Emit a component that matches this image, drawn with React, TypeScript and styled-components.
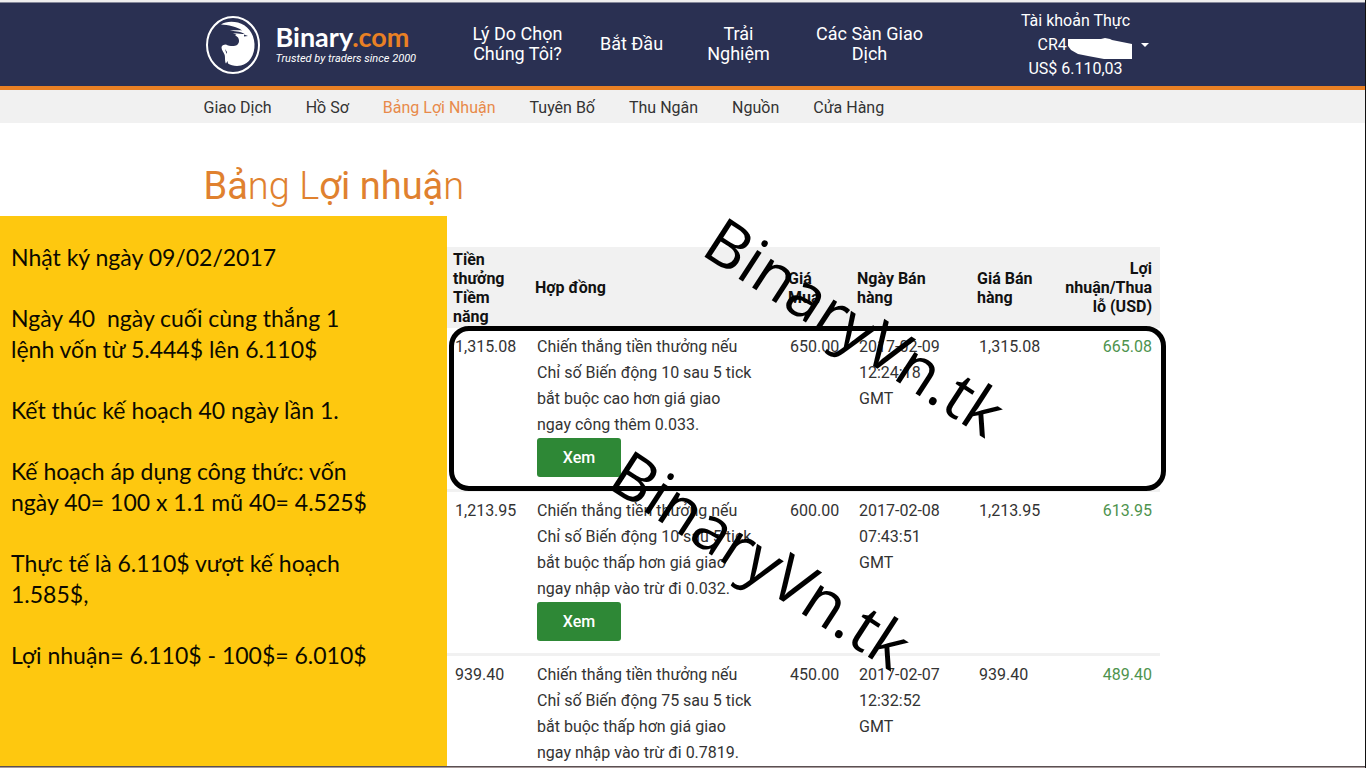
import React from 'react';
import styled, { createGlobalStyle } from 'styled-components';

const GlobalStyle = createGlobalStyle`
  *, *::before, *::after { box-sizing: border-box; }
  body { margin: 0; background: #fff; font-family: Roboto, "Liberation Sans", sans-serif; color: #2a2a2a; }
  a { color: inherit; text-decoration: none; }
`;

const Page = styled.div`
  display: flex;
  flex-direction: column;
  height: 100vh;
  overflow: hidden;
  border-right: 1px solid #111;
`;

const Header = styled.header`
  flex: none;
  background: #2a3052;
  border-top: 2px solid #eeeeee;
  border-bottom: 4px solid #e98024;
`;

const Container = styled.div`
  width: 70%;
  min-width: 958px;
  margin: 0 auto;
  display: flex;
  align-items: center;
`;

const HeaderRow = styled(Container)`
  height: 83px;
  color: #fff;
`;

const TopLine = styled.div`
  height: 1px;
  background: #85889a;
`;

const Brand = styled.a`
  display: flex;
  align-items: center;
  gap: 14px;
  width: 234px;
`;

const BrandText = styled.span`
  display: block;
  padding-bottom: 4px;
`;

const BrandName = styled.span`
  display: block;
  font: 700 27px/32px Lato, sans-serif;
  em { font-style: normal; color: #e98024; }
`;

const Tagline = styled.span`
  display: block;
  font: italic 11px/12px Roboto, sans-serif;
  white-space: nowrap;
`;

const MainNav = styled.nav`
  display: flex;
  align-items: center;
  flex: 1;
  padding-bottom: 2px;
`;

const MainLink = styled.a<{ $w: number }>`
  width: ${(p) => p.$w}px;
  text-align: center;
  font-size: 18px;
  line-height: 20px;
  white-space: nowrap;
`;

const Account = styled.div`
  display: grid;
  grid-template-columns: 114px 24px;
  align-items: center;
  width: 143px;
  font-size: 16px;
  line-height: 24px;
  text-align: center;
`;

const AccountId = styled.span`
  position: relative;
  display: block;
  padding-left: 19px;
  text-align: left;
  svg { position: absolute; left: 49px; top: 5px; }
`;

const MenuButton = styled.button`
  display: grid;
  place-items: center;
  border: 0;
  padding: 0;
  height: 24px;
  background: none;
`;

const SubNav = styled.nav`
  flex: none;
  background: #f1f1f1;
`;

const SubRow = styled(Container)`
  height: 33px;
  padding-top: 2px;
  gap: 34px;
  font-size: 16px;
`;

const SubLink = styled.a<{ $active?: boolean }>`
  color: ${(p) => (p.$active ? '#e88a4a' : '#333')};
  white-space: nowrap;
`;

const TitleRow = styled(Container)`
  flex: none;
  height: 93px;
  padding-top: 32px;
`;

const Title = styled.h1`
  margin: 0;
  color: #e0812f;
  font-size: 38px;
  line-height: 60px;
  font-weight: 400;
  white-space: nowrap;
`;

const Stroke = styled.span<{ $weight: number }>`
  font-weight: ${(p) => p.$weight};
`;

const Content = styled.main`
  position: relative;
  flex: 1;
  min-height: 0;
  display: flex;
  align-items: stretch;
`;

const Note = styled.aside`
  flex: none;
  width: 447px;
  padding: 26px 60px 0 11px;
  background: #fec80f;
  color: #0c0a00;
  font: 23px/31px Lato, "Noto Sans", sans-serif;
  p { margin: 0 0 30px; white-space: pre-line; }
`;

const Records = styled.section`
  position: relative;
  flex: none;
  width: 713px;
  padding-top: 31px;
`;

const Table = styled.table`
  width: 100%;
  border-collapse: collapse;
  table-layout: fixed;
`;

const Th = styled.th<{ $end?: boolean }>`
  height: 81px;
  padding: 0 8px 0 6px;
  background: #f1f1f1;
  color: #111;
  font-size: 16px;
  line-height: 19px;
  font-weight: 700;
  text-align: ${(p) => (p.$end ? 'right' : 'left')};
  vertical-align: middle;
`;

const Td = styled.td<{ $end?: boolean }>`
  padding: 6px 8px;
  border-bottom: 3px solid #f1f1f1;
  vertical-align: top;
  font-size: 16px;
  line-height: 26px;
  color: ${(p) => (p.$end ? '#4e934e' : '#333')};
  text-align: ${(p) => (p.$end ? 'right' : 'left')};
  tr:last-child & { border-bottom: 0; padding-bottom: 0; }
`;

const ViewButton = styled.button`
  display: block;
  width: 84px;
  height: 39px;
  margin-bottom: 6px;
  border: 0;
  border-radius: 3px;
  background: #2e8836;
  color: #fff;
  font: 500 16px/20px Roboto, sans-serif;
`;

const Highlight = styled.div`
  position: absolute;
  left: 2px;
  top: 110px;
  width: 717px;
  height: 165px;
  border: 5px solid #000;
  border-radius: 20px;
  pointer-events: none;
`;

const Watermark = styled.span<{ $x: number; $y: number }>`
  position: absolute;
  left: ${(p) => p.$x}px;
  top: ${(p) => p.$y}px;
  color: #000;
  font: 64px/64px "Open Sans", sans-serif;
  font-kerning: none;
  transform: rotate(33deg);
  transform-origin: 0 100%;
  white-space: nowrap;
  pointer-events: none;
`;

const BottomEdge = styled.div`
  flex: none;
  height: 2px;
  background: #a89a9a;
  border-top: 1px solid #5a5052;
`;

const mainLinks = [
  { label: <>Lý Do Chọn<br />Chúng Tôi?</>, w: 160 },
  { label: <>Bắt Đầu</>, w: 68 },
  { label: <>Trải<br />Nghiệm</>, w: 146 },
  { label: <>Các Sàn Giao<br />Dịch</>, w: 116 },
];

const subLinks = ['Giao Dịch', 'Hồ Sơ', 'Bảng Lợi Nhuận', 'Tuyên Bố', 'Thu Ngân', 'Nguồn', 'Cửa Hàng'];

const columns = [
  { lines: ['Tiền', 'thưởng', 'Tiềm', 'năng'], w: 82 },
  { lines: ['Hợp đồng'], w: 253 },
  { lines: ['Giá', 'Mua'], w: 69 },
  { lines: ['Ngày Bán', 'hàng'], w: 120 },
  { lines: ['Giá Bán', 'hàng'], w: 80 },
  { lines: ['Lợi', 'nhuận/Thua', 'lỗ (USD)'], w: 109 },
];

const rows = [
  {
    payout: '1,315.08',
    text: ['Chiến thắng tiền thưởng nếu', 'Chỉ số Biến động 10 sau 5 tick', 'bắt buộc cao hơn giá giao', 'ngay công thêm 0.033.'],
    buy: '650.00',
    date: ['2017-02-09', '12:24:18', 'GMT'],
    sell: '1,315.08',
    profit: '665.08',
    viewable: true,
  },
  {
    payout: '1,213.95',
    text: ['Chiến thắng tiền thưởng nếu', 'Chỉ số Biến động 10 sau 5 tick', 'bắt buộc thấp hơn giá giao', 'ngay nhập vào trừ đi 0.032.'],
    buy: '600.00',
    date: ['2017-02-08', '07:43:51', 'GMT'],
    sell: '1,213.95',
    profit: '613.95',
    viewable: true,
  },
  {
    payout: '939.40',
    text: ['Chiến thắng tiền thưởng nếu', 'Chỉ số Biến động 75 sau 5 tick', 'bắt buộc thấp hơn giá giao', 'ngay nhập vào trừ đi 0.7819.'],
    buy: '450.00',
    date: ['2017-02-07', '12:32:52', 'GMT'],
    sell: '939.40',
    profit: '489.40',
    viewable: false,
  },
];

const notes = [
  'Nhật ký ngày 09/02/2017',
  'Ngày 40 \u00a0ngày cuối cùng thắng 1\nlệnh vốn từ 5.444$ lên 6.110$',
  'Kết thúc kế hoạch 40 ngày lần 1.',
  'Kế hoạch áp dụng công thức: vốn\nngày 40= 100 x 1.1 mũ 40= 4.525$',
  'Thực tế là 6.110$ vượt kế hoạch\n1.585$,',
  'Lợi nhuận= 6.110$ - 100$= 6.010$',
];

const Lines = ({ items }: { items: string[] }) => (
  <>
    {items.map((line, i) => (
      <React.Fragment key={line}>
        {i > 0 && <br />}
        {line}
      </React.Fragment>
    ))}
  </>
);

const Logo = () => (
  <svg width="58" height="60" viewBox="0 0 58 60" aria-hidden="true">
    <ellipse cx="29" cy="30" rx="26" ry="28" fill="none" stroke="#fff" strokeWidth="2" />
    <path
      fill="#fff"
      d="M17 9.500C21 6.500 28 6 34 7.500C43 10 50 18 50.500 29C51 40 45 49 37 50.500C32 51.500 27 50.500 24 48.500L23.500 46L22 48.500C20.500 46.500 21.500 42 20.500 39.500C19.500 37 17.500 35 17.500 32.500C17.500 30.500 19.500 29.500 22 29.500C25 31 30 32 33 30C35.500 28 35.500 25 34 22.500L31 20L32.500 19L29 18.500C31.500 17.500 37 19 40.500 19C36 16 30 16.500 26 15.500C30 15.500 35 15 38 15.500C33 11.500 24 10 17 9.500Z"
    />
    <path fill="#2a3052" d="M21 34l2 3-.5 2zM40 19.500l4 1.500-4 .5z" />
  </svg>
);

export default function App() {
  return (
    <Page>
      <GlobalStyle />
      <Header>
        <TopLine />
        <HeaderRow>
          <Brand href="#">
            <Logo />
            <BrandText>
              <BrandName>Binary<em>.com</em></BrandName>
              <Tagline>Trusted by traders since 2000</Tagline>
            </BrandText>
          </Brand>
          <MainNav>
            {mainLinks.map((l) => (
              <MainLink key={l.w} href="#" $w={l.w}>{l.label}</MainLink>
            ))}
          </MainNav>
          <Account>
            <span>Tài khoản Thực</span>
            <span />
            <AccountId>
              CR4
              <svg width="65" height="22" viewBox="0 0 65 22" aria-hidden="true">
                <path fill="#fff" d="M0 1H33L37 0L42 1L44 2L54 4L64 6V21H36L20 18L10 16L3 12L0 8Z" />
              </svg>
            </AccountId>
            <MenuButton aria-label="Tài khoản">
              <svg width="8" height="4" viewBox="0 0 8 4" aria-hidden="true"><path fill="#fff" d="M0 0H8L4 4Z" /></svg>
            </MenuButton>
            <span>US$ 6.110,03</span>
          </Account>
        </HeaderRow>
      </Header>
      <SubNav>
        <SubRow>
          {subLinks.map((l) => (
            <SubLink key={l} href="#" $active={l === 'Bảng Lợi Nhuận'}>{l}</SubLink>
          ))}
        </SubRow>
      </SubNav>
      <TitleRow>
        <Title>
          Bả<Stroke $weight={300}>ng</Stroke> <Stroke $weight={300}>L</Stroke>ợi nhuậ<Stroke $weight={300}>n</Stroke>
        </Title>
      </TitleRow>
      <Content>
        <Note>
          {notes.map((n) => <p key={n}>{n}</p>)}
        </Note>
        <Records>
          <Table>
            <colgroup>
              {columns.map((c) => <col key={c.lines.join()} width={c.w} />)}
            </colgroup>
            <thead>
              <tr>
                {columns.map((c, i) => (
                  <Th key={c.lines.join()} $end={i === 5}><Lines items={c.lines} /></Th>
                ))}
              </tr>
            </thead>
            <tbody>
              {rows.map((r) => (
                <tr key={r.payout}>
                  <Td>{r.payout}</Td>
                  <Td>
                    <Lines items={r.text} />
                    {r.viewable && <ViewButton>Xem</ViewButton>}
                  </Td>
                  <Td>{r.buy}</Td>
                  <Td><Lines items={r.date} /></Td>
                  <Td>{r.sell}</Td>
                  <Td $end>{r.profit}</Td>
                </tr>
              ))}
            </tbody>
          </Table>
          <Highlight />
          <Watermark $x={248} $y={-20} aria-hidden="true">BinaryVn.tk</Watermark>
          <Watermark $x={154} $y={213} aria-hidden="true">BinaryVn.tk</Watermark>
        </Records>
      </Content>
      <BottomEdge />
    </Page>
  );
}
